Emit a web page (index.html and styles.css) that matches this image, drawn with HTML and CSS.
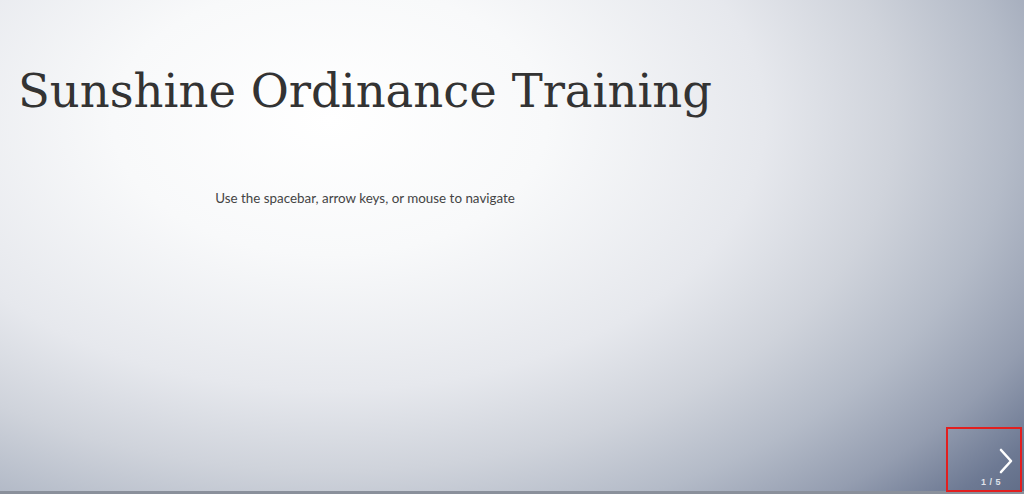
FILE: index.html
```html
<!DOCTYPE html>
<html>
<head>
<meta charset="utf-8">
<link rel="stylesheet" href="styles.css">
</head>
<body>
<div class="deck">
  <section class="slide">
    <div class="content">
      <h1 class="title">Sunshine Ordinance Training</h1>
      <p class="hint">Use the spacebar, arrow keys, or mouse to navigate</p>
    </div>
  </section>
  <div class="controls">
    <svg class="next" viewBox="0 0 16 28" width="16" height="28"><path d="M3 3 L13 14 L3 25" fill="none" stroke="#ffffff" stroke-width="2.6" stroke-linecap="round" stroke-linejoin="round"/></svg>
    <span class="count">1 / 5</span>
  </div>
  <div class="bottom-line"></div>
</div>
</body>
</html>
```
FILE: styles.css
```css
html, body {
  margin: 0;
  padding: 0;
  width: 1024px;
  height: 494px;
  overflow: hidden;
}
.deck {
  position: relative;
  width: 1024px;
  height: 494px;
  background: radial-gradient(ellipse 870px 540px at 330px 120px, #ffffff 0%, #f8f9fa 25%, #e6e8ed 50%, #cfd3db 65%, #b4bbc8 78%, #949db0 90%, #6d7993 100%, #56637e 110%);
  display: flex;
  flex-direction: column;
}
.slide {
  flex: 1;
  padding: 60px 0 0 18px;
}
.content {
  display: inline-flex;
  flex-direction: column;
  align-items: center;
}
.title {
  margin: 0;
  font-family: "DejaVu Serif", Georgia, serif;
  font-weight: normal;
  font-size: 46.5px;
  line-height: 62px;
  color: #333333;
}
.hint {
  margin: 68px 0 0 0;
  font-family: "Lato", "Open Sans", sans-serif;
  font-size: 13.4px;
  color: #444444;
}
.controls {
  position: absolute;
  right: 2px;
  bottom: 2px;
  width: 72px;
  height: 61px;
  border: 2px solid #e21f1f;
}
.next {
  position: absolute;
  right: 6px;
  top: 18px;
}
.count {
  position: absolute;
  left: 33px;
  bottom: 3px;
  font-family: "Liberation Sans", sans-serif;
  font-size: 9px;
  font-weight: bold;
  color: #dfe3ea;
  letter-spacing: 0.5px;
}
.bottom-line {
  height: 3px;
  background: #8a909b;
}
```
